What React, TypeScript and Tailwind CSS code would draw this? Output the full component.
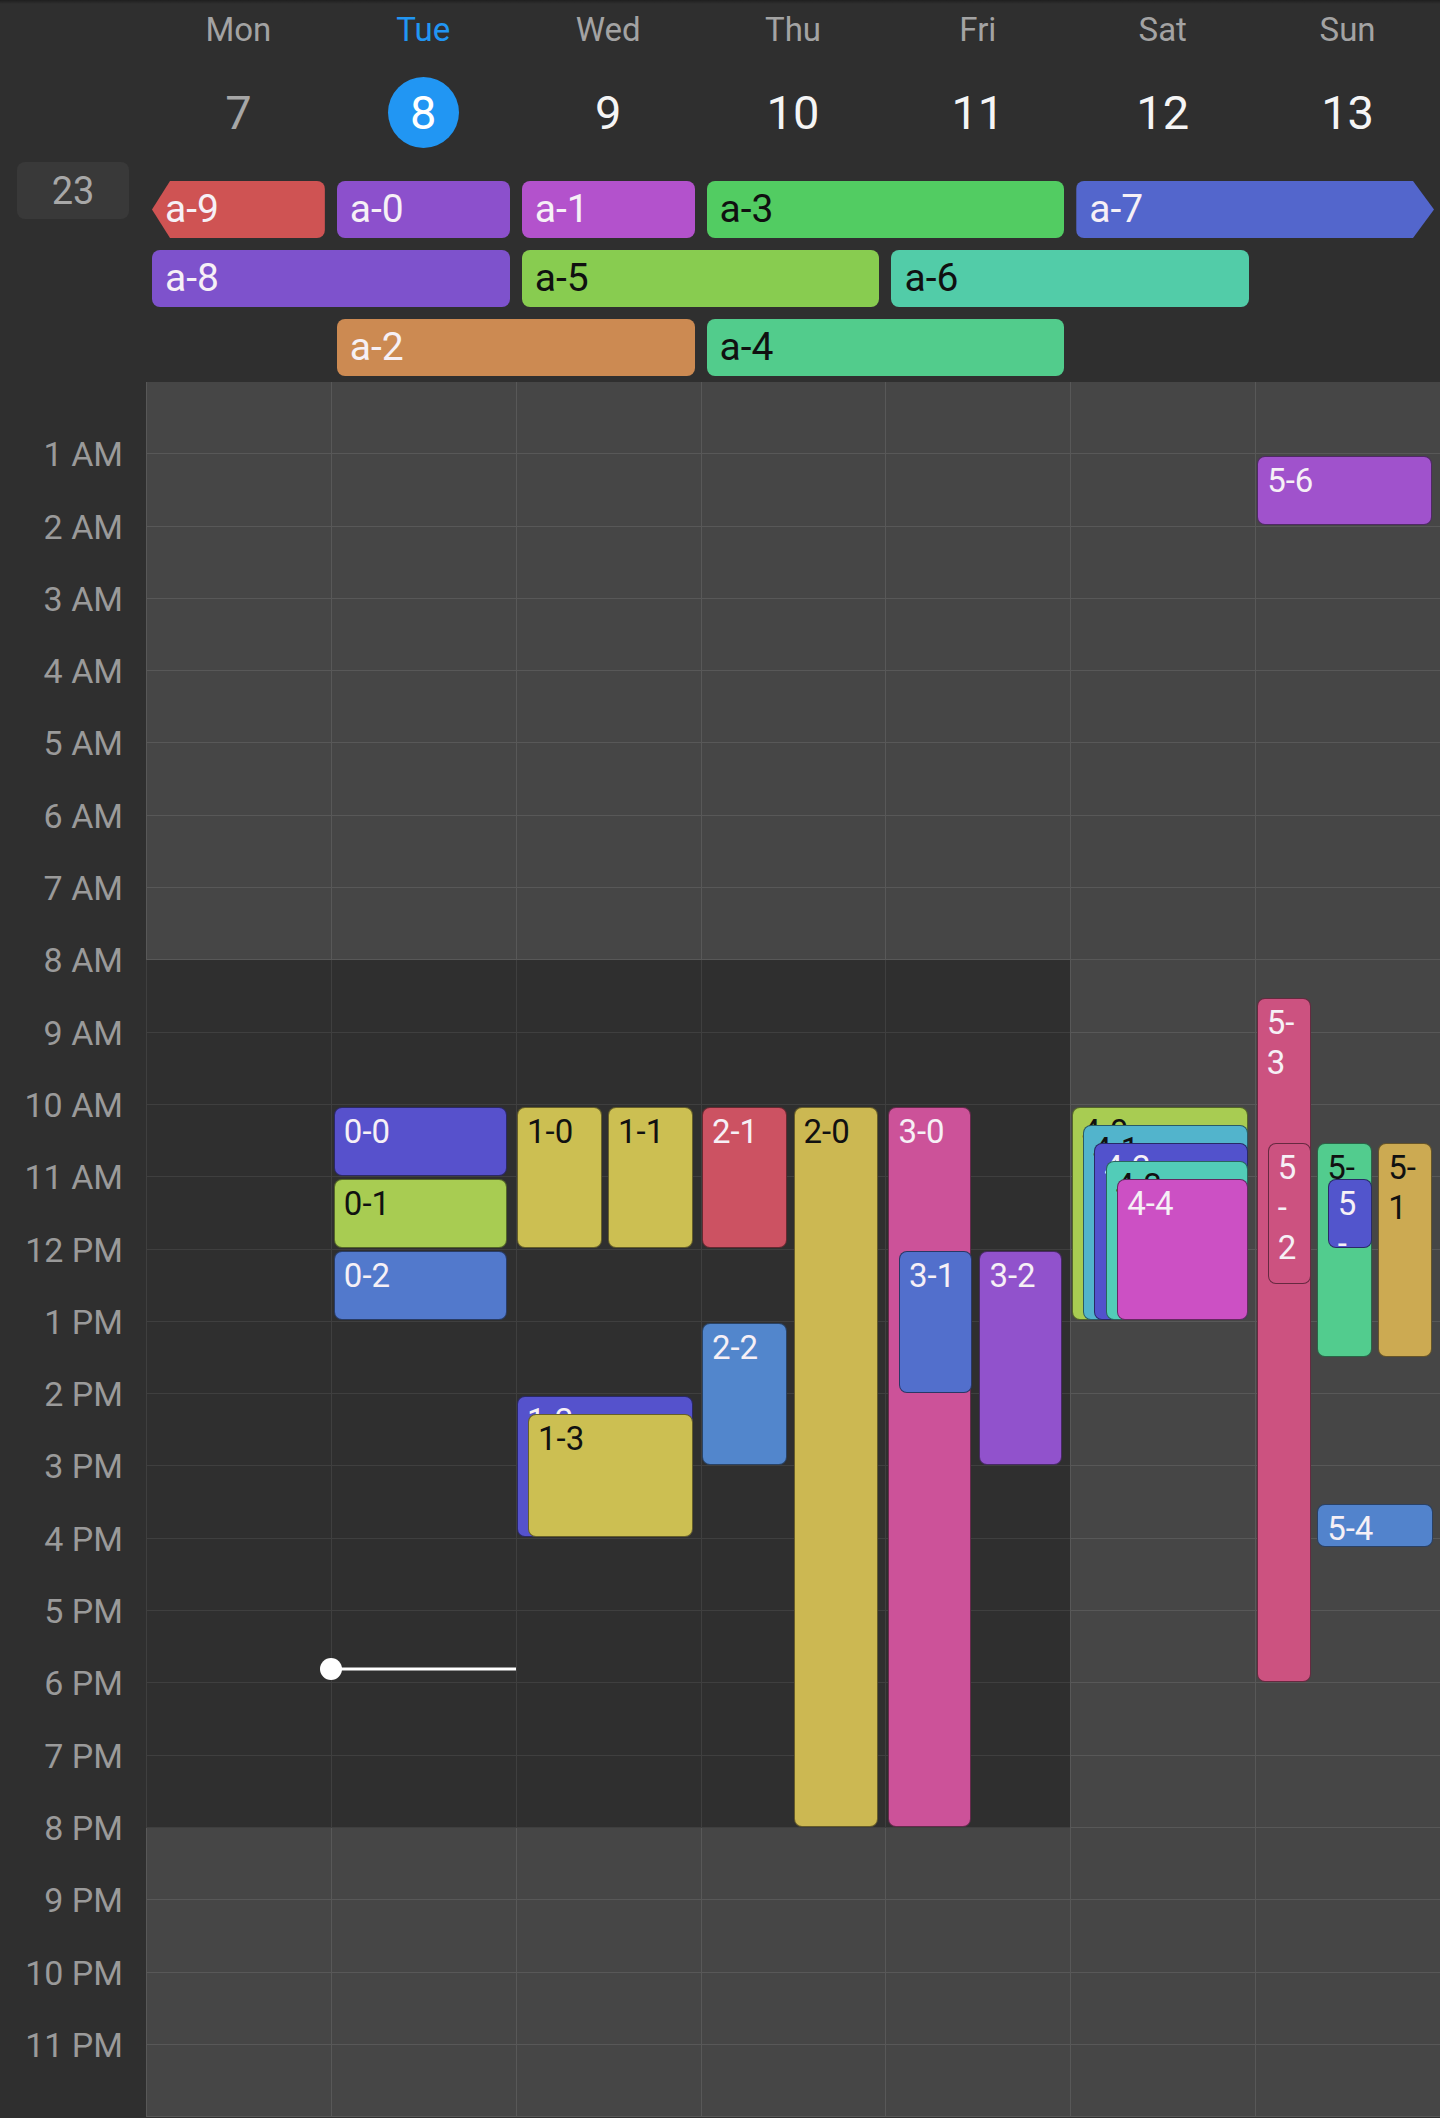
import React from "react";

const HOUR = 72.3;

const days = [
  { name: "Mon", num: "7", state: "past" },
  { name: "Tue", num: "8", state: "today" },
  { name: "Wed", num: "9", state: "future" },
  { name: "Thu", num: "10", state: "future" },
  { name: "Fri", num: "11", state: "future" },
  { name: "Sat", num: "12", state: "future" },
  { name: "Sun", num: "13", state: "future" },
];

type AllDay = {
  label: string;
  pos: string;
  color: string;
  dark?: boolean;
  arrow?: "left" | "right";
};

const allDay: AllDay[] = [
  { label: "a-9", pos: "col-start-1 col-span-1 row-start-1", color: "#CF5353", arrow: "left" },
  { label: "a-0", pos: "col-start-2 col-span-1 row-start-1", color: "#8C50CC" },
  { label: "a-1", pos: "col-start-3 col-span-1 row-start-1", color: "#B352CC" },
  { label: "a-3", pos: "col-start-4 col-span-2 row-start-1", color: "#52CC62", dark: true },
  { label: "a-7", pos: "col-start-6 col-span-2 row-start-1", color: "#5366CC", arrow: "right" },
  { label: "a-8", pos: "col-start-1 col-span-2 row-start-2", color: "#7E52CC" },
  { label: "a-5", pos: "col-start-3 col-span-2 row-start-2", color: "#88CC50", dark: true },
  { label: "a-6", pos: "col-start-5 col-span-2 row-start-2", color: "#52CCA8", dark: true },
  { label: "a-2", pos: "col-start-2 col-span-2 row-start-3", color: "#CC8A52" },
  { label: "a-4", pos: "col-start-4 col-span-2 row-start-3", color: "#52CC8C", dark: true },
];

type Ev = {
  label: string;
  start: number;
  end: number;
  left: number;
  width: number;
  color: string;
  dark?: boolean;
};

const events: Ev[][] = [
  [],
  [
    { label: "0-0", start: 600, end: 660, left: 3, width: 173, color: "#5751CC" },
    { label: "0-1", start: 660, end: 720, left: 3, width: 173, color: "#A8CC52", dark: true },
    { label: "0-2", start: 720, end: 780, left: 3, width: 173, color: "#5279CC" },
  ],
  [
    { label: "1-0", start: 600, end: 720, left: 1.3, width: 85, color: "#CCBF52", dark: true },
    { label: "1-1", start: 600, end: 720, left: 92.3, width: 85, color: "#CCBF52", dark: true },
    { label: "1-2", start: 840, end: 960, left: 1.3, width: 176, color: "#5552CC" },
    { label: "1-3", start: 855, end: 960, left: 12.3, width: 165, color: "#CCBF52", dark: true },
  ],
  [
    { label: "2-1", start: 600, end: 720, left: 1.4, width: 85, color: "#CC5262" },
    { label: "2-2", start: 780, end: 900, left: 1.4, width: 85, color: "#5286CC" },
    { label: "2-0", start: 600, end: 1200, left: 93, width: 84, color: "#CCB852", dark: true },
  ],
  [
    { label: "3-0", start: 600, end: 1200, left: 3, width: 83, color: "#CC5299" },
    { label: "3-1", start: 720, end: 840, left: 13.6, width: 73, color: "#526FCC" },
    { label: "3-2", start: 720, end: 900, left: 94, width: 83, color: "#9152CC" },
  ],
  [
    { label: "4-0", start: 600, end: 780, left: 1.7, width: 176, color: "#A8CC52", dark: true },
    { label: "4-1", start: 615, end: 780, left: 12.7, width: 165, color: "#52B4CC", dark: true },
    { label: "4-2", start: 630, end: 780, left: 24, width: 153.7, color: "#5252CC" },
    { label: "4-3", start: 645, end: 780, left: 35.5, width: 142.2, color: "#52CCB8", dark: true },
    { label: "4-4", start: 660, end: 780, left: 47, width: 130.7, color: "#CC50C4" },
  ],
  [
    { label: "5-6", start: 60, end: 120, left: 2, width: 175, color: "#A052CC" },
    { label: "5-3", start: 510, end: 1080, left: 1.6, width: 54, color: "#CC5280" },
    { label: "5-2", start: 630, end: 750, left: 12.6, width: 43, color: "#CC5280" },
    { label: "5-0", start: 630, end: 810, left: 62, width: 55, color: "#52CC8E", dark: true },
    { label: "5-5", start: 660, end: 720, left: 72.6, width: 44.5, color: "#5255CC" },
    { label: "5-1", start: 630, end: 810, left: 123, width: 54, color: "#CCAA52", dark: true },
    { label: "5-4", start: 930, end: 968, left: 62, width: 116, color: "#5283CC" },
  ],
];

const hourLabels = [
  "1 AM", "2 AM", "3 AM", "4 AM", "5 AM", "6 AM", "7 AM", "8 AM", "9 AM", "10 AM", "11 AM",
  "12 PM", "1 PM", "2 PM", "3 PM", "4 PM", "5 PM", "6 PM", "7 PM", "8 PM", "9 PM", "10 PM", "11 PM",
];

const hours = Array.from({ length: 24 }, (_, i) => i);

function AllDayEvent({ e }: { e: AllDay }) {
  const shape =
    e.arrow === "left"
      ? "rounded-r-lg [clip-path:polygon(18px_0,100%_0,100%_100%,18px_100%,0_50%)]"
      : e.arrow === "right"
      ? "rounded-l-lg [clip-path:polygon(0_0,calc(100%_-_21px)_0,100%_50%,calc(100%_-_21px)_100%,0_100%)]"
      : "rounded-lg";
  return (
    <div
      className={`${e.pos} mx-[6px] h-[57px] flex items-center pl-[13px] text-[39px] leading-none ${shape} ${
        e.dark ? "text-[#101010]" : "text-[#f6f0f6]"
      }`}
      style={{ backgroundColor: e.color }}
    >
      {e.label}
    </div>
  );
}

function TimedEvent({ e }: { e: Ev }) {
  const top = (e.start / 60) * HOUR + 1.5;
  const height = ((e.end - e.start) / 60) * HOUR - 3;
  return (
    <div
      className={`absolute overflow-hidden rounded-lg border-[1.5px] border-black/50 pl-[9px] pr-[9px] pt-[4px] text-[33px] leading-[40px] break-all ${
        e.dark ? "text-[#111111]" : "text-[#f6f0f6]"
      }`}
      style={{ top, height, left: e.left, width: e.width, backgroundColor: e.color }}
    >
      {e.label}
    </div>
  );
}

export default function App() {
  const nowTop = (1068 / 60) * HOUR;
  return (
    <div className="w-[1440px] h-[2118px] overflow-hidden bg-[#2f2f2f] flex flex-col [font-family:Roboto,'Noto_Sans',sans-serif]">
      {/* header */}
      <div className="h-[4px] bg-gradient-to-b from-[#1f1f1f] to-[#2f2f2f]" />
      <div className="flex h-[144px]">
        <div className="w-[146px] shrink-0" />
        <div className="flex-1 grid grid-cols-7">
          {days.map((d) => (
            <div key={d.name} className="flex flex-col items-center">
              <div
                className={`mt-[6px] h-[40px] leading-[40px] text-[33px] ${
                  d.state === "today" ? "text-[#2196F3]" : "text-[#a3a3a3]"
                }`}
              >
                {d.name}
              </div>
              <div
                className={`mt-[27px] w-[71px] h-[71px] rounded-full flex items-center justify-center text-[47px] leading-none ${
                  d.state === "today"
                    ? "bg-[#2196F3] text-white"
                    : d.state === "past"
                    ? "text-[#a6a6a6]"
                    : "text-[#f5f5f5]"
                }`}
              >
                {d.num}
              </div>
            </div>
          ))}
        </div>
      </div>

      {/* all-day */}
      <div className="flex h-[234px]">
        <div className="w-[146px] shrink-0 pt-[14px] pl-[17px]">
          <div className="w-[112px] h-[57px] rounded-lg bg-[#393939] flex items-center justify-center text-[38px] text-[#a8a8a8] leading-none">
            23
          </div>
        </div>
        <div className="flex-1 pt-[33px]">
          <div className="grid grid-cols-7 grid-rows-[57px_57px_57px] gap-y-[12px]">
            {allDay.map((e) => (
              <AllDayEvent key={e.label} e={e} />
            ))}
          </div>
        </div>
      </div>

      {/* time grid */}
      <div className="flex h-[1736px] shrink-0">
        <div className="w-[146px] shrink-0 pt-[36.15px] flex flex-col">
          {hourLabels.map((h) => (
            <div
              key={h}
              className="h-[72.3px] shrink-0 flex items-center justify-end pr-[23px] text-[34px] text-[#9a9a9a] leading-none"
            >
              {h}
            </div>
          ))}
        </div>
        <div className="flex-1 grid grid-cols-7">
          {days.map((d, ci) => (
            <div key={d.name} className="relative flex flex-col">
              {hours.map((h) => {
                const work = ci < 5 && h >= 8 && h < 20;
                return (
                  <div
                    key={h}
                    className={`h-[72.3px] shrink-0 border-l border-b ${
                      work ? "bg-[#2f2f2f] border-[#3f3f3f]" : "bg-[#464646] border-[#585858]"
                    }`}
                  />
                );
              })}
              {events[ci].map((e) => (
                <TimedEvent key={e.label} e={e} />
              ))}
              {d.state === "today" && (
                <div className="absolute left-0 w-full" style={{ top: nowTop }}>
                  <div className="absolute left-0 right-0 h-[3px] -translate-y-1/2 bg-white" />
                  <div className="absolute left-[-11px] w-[22px] h-[22px] -translate-y-1/2 rounded-full bg-white" />
                </div>
              )}
            </div>
          ))}
        </div>
      </div>
    </div>
  );
}
